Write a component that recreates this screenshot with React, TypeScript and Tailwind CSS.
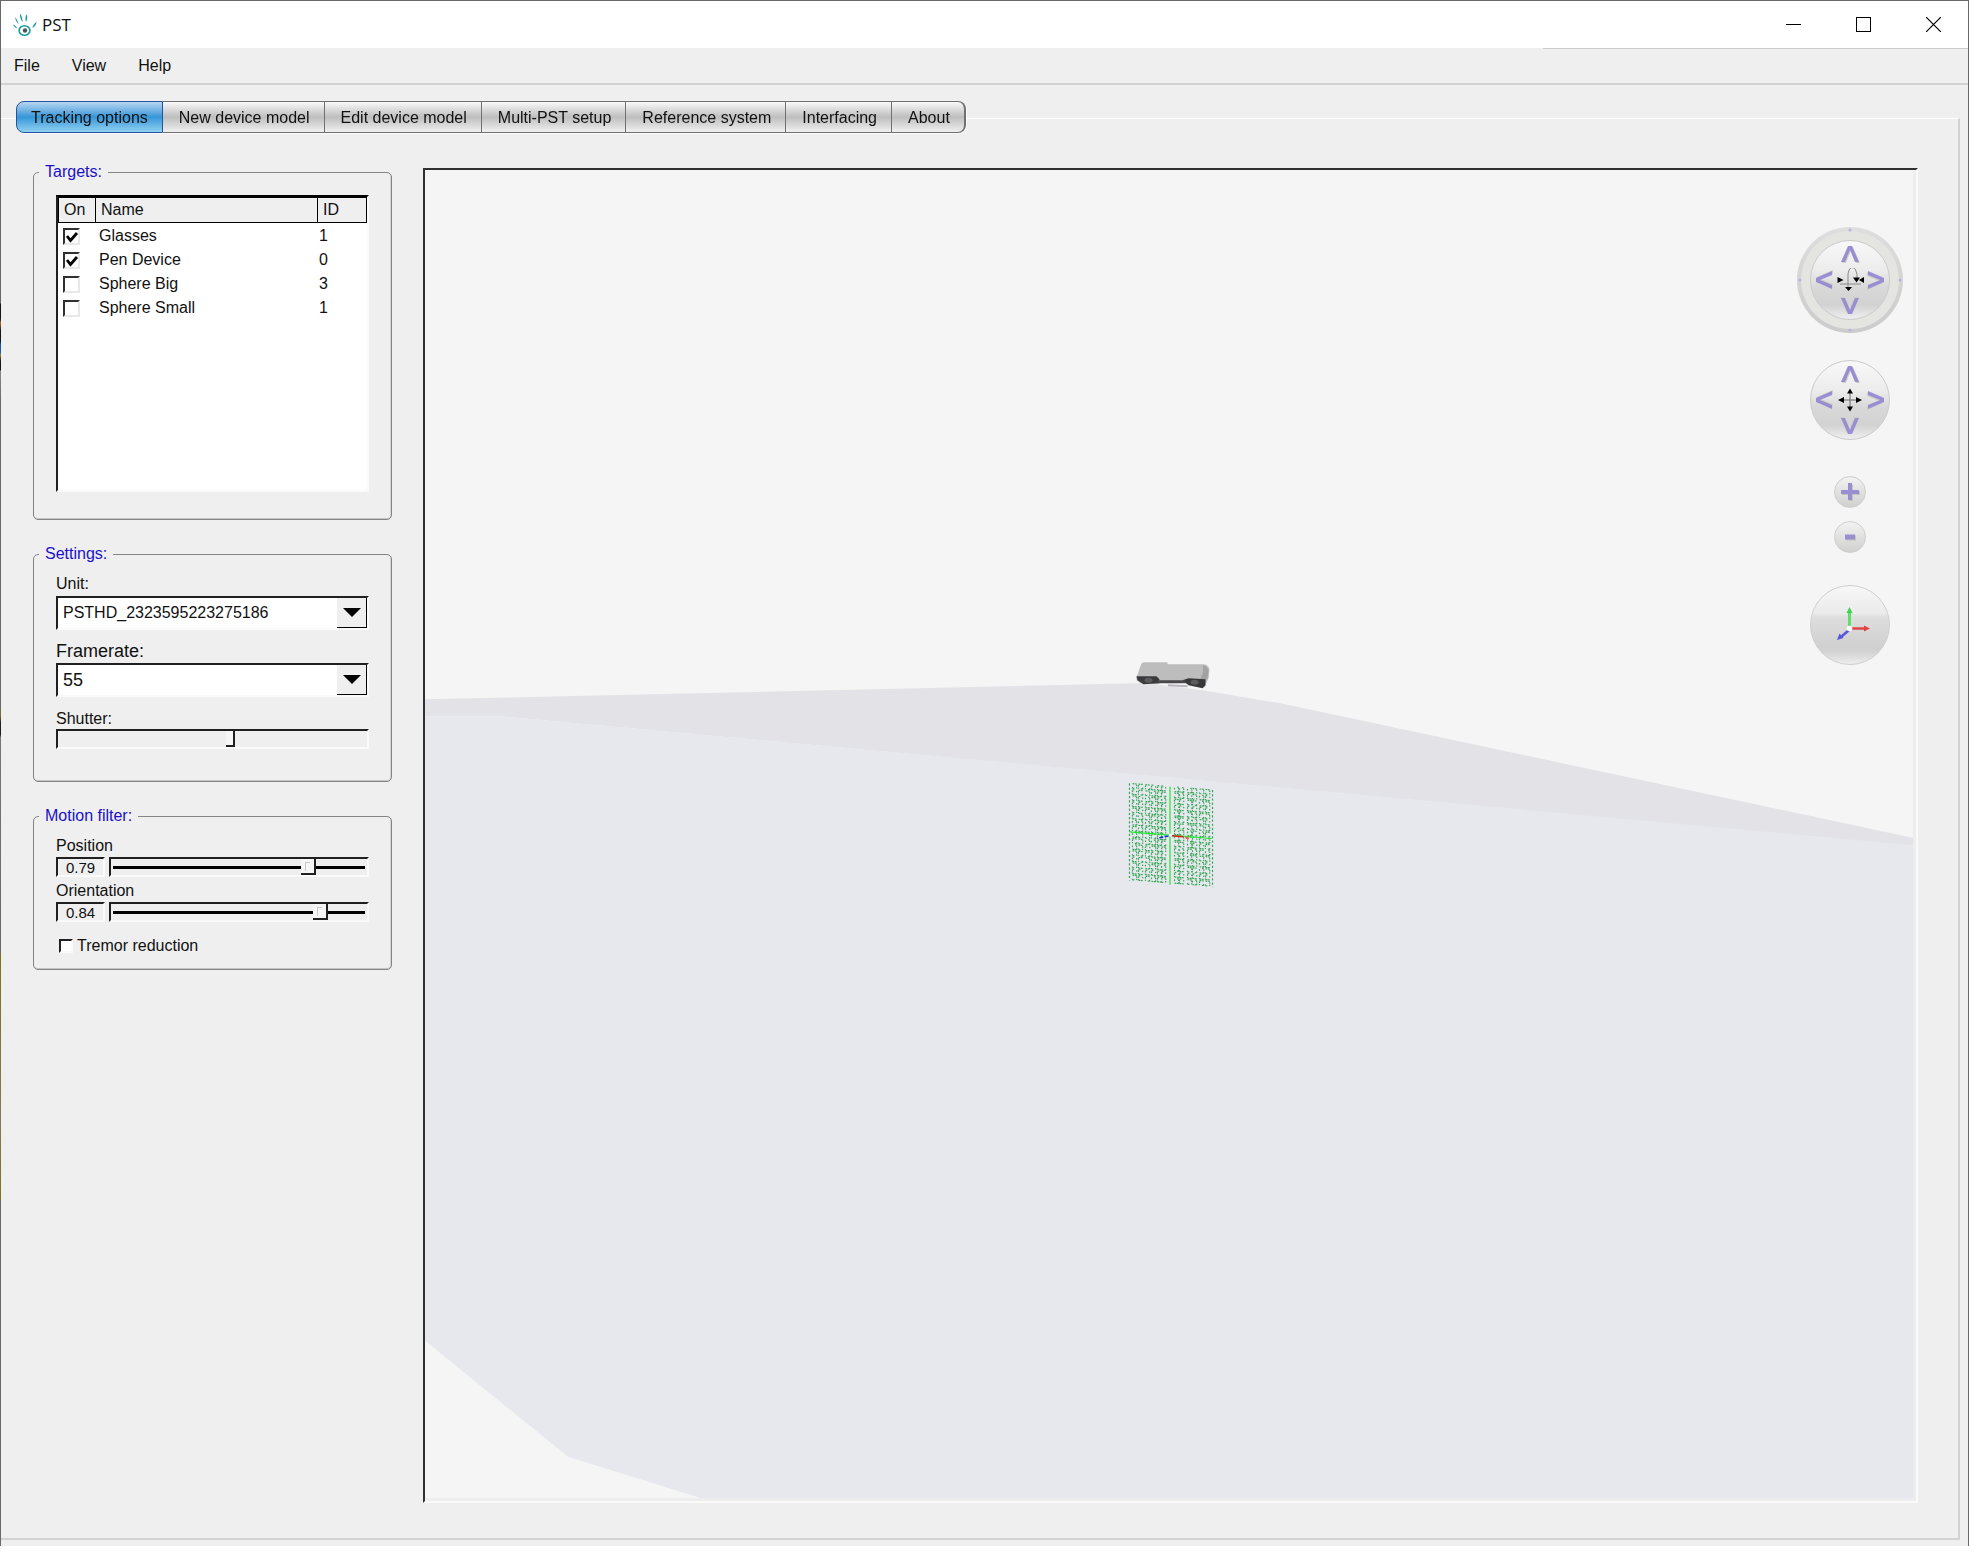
import { useState, type ReactNode } from "react";
import clsx from "clsx";

const MENUS = ["File", "View", "Help"];

const TABS = [
  "Tracking options",
  "New device model",
  "Edit device model",
  "Multi-PST setup",
  "Reference system",
  "Interfacing",
  "About",
];

const TARGETS = [
  { name: "Glasses", id: 1, on: true },
  { name: "Pen Device", id: 0, on: true },
  { name: "Sphere Big", id: 3, on: false },
  { name: "Sphere Small", id: 1, on: false },
];

function Logo() {
  return (
    <svg viewBox="0 0 24 24" className="h-6 w-6" fill="#169c9f">
      <path d="M2 4.2c1.4 1.4 3.2 4.6 3.6 7-1.6-1.8-3.4-4.8-3.6-7ZM7 .4c1.6 2.2 2.8 5.6 2.6 8.8C7.900 6.800 6.600 3.400 7 .4ZM13.400 1.200c1.400 1.800 1 5-.4 7.800-.8-2.800-.6-5.800.4-7.800ZM0 11.600c1.600.4 3.400 2 4.200 3.800-2-.6-3.600-2.200-4.200-3.800ZM23.600 9c-.4 2.600-2 5-4.200 6 .4-2.200 2-5 4.200-6Z" />
      <ellipse cx="11.500" cy="17.500" rx="5.400" ry="4.800" fill="none" stroke="#169c9f" strokeWidth="1.600" />
      <circle cx="12" cy="17.500" r="2.200" fill="#4d5557" />
    </svg>
  );
}

function TitleBar() {
  return (
    <header className="flex h-[47px] items-center bg-white pl-3">
      <Logo />
      <h1 className="ml-[5px] flex-1 font-['Open_Sans',sans-serif] text-[17px] leading-6">PST</h1>
      <button aria-label="Minimize" className="flex h-full w-[70px] items-center justify-center">
        <svg width="15" height="15" shapeRendering="crispEdges">
          <path d="M0 7.500h15" stroke="#000" />
        </svg>
      </button>
      <button aria-label="Maximize" className="flex h-full w-[70px] items-center justify-center">
        <svg width="15" height="15" shapeRendering="crispEdges">
          <rect x=".5" y=".5" width="14" height="14" fill="none" stroke="#000" />
        </svg>
      </button>
      <button aria-label="Close" className="flex h-full w-[70px] items-center justify-center">
        <svg width="15" height="15">
          <path d="M0 0l15 15M15 0L0 15" stroke="#000" strokeWidth="1.200" />
        </svg>
      </button>
    </header>
  );
}

function Tabs({ active, onSelect }: { active: string; onSelect: (tab: string) => void }) {
  return (
    <div role="tablist" className="-mt-[18px] ml-[15px] flex h-8 self-start drop-shadow-[1px_1px_0_#fafafa]">
      {TABS.map((tab) => (
        <button
          key={tab}
          role="tab"
          aria-selected={tab === active}
          onClick={() => onSelect(tab)}
          className={clsx(
            "border-y border-r pl-4 pr-[14px] pt-[2px] text-base leading-6 first:rounded-l-lg first:border-l first:pl-[14px] last:rounded-r-lg last:border-r-2",
            tab === active
              ? "border-[#26529f] bg-linear-to-b from-[#b4d6f0] via-[#3396d8] to-[#8fd2f2]"
              : "border-[#707070] bg-linear-to-b from-[#fafafa] via-[#bebebe] to-[#f0f0f0]"
          )}
        >
          {tab}
        </button>
      ))}
    </div>
  );
}

function Group({ title, className, children }: { title: string; className?: string; children: ReactNode }) {
  return (
    <fieldset className={clsx("rounded-[5px] border border-[#858585] px-[22px] shadow-[inset_0_-1px_0_#c4c4c4,inset_-1px_0_0_#d4d4d4]", className)}>
      <legend className="-ml-[17px] px-[6px] text-base leading-5 text-[#1a10cc]">{title}</legend>
      {children}
    </fieldset>
  );
}

function Tick({ label, on, onToggle }: { label: string; on: boolean; onToggle: () => void }) {
  return (
    <span className="relative block h-[17px] w-[17px]">
      <input
        type="checkbox"
        aria-label={label}
        checked={on}
        onChange={onToggle}
        className="peer block h-[17px] w-[17px] appearance-none border-2 border-[#e8e8e8] border-l-[#303030] border-t-[#303030] bg-white"
      />
      <svg viewBox="0 0 17 17" className="pointer-events-none absolute inset-0 hidden peer-checked:block">
        <path d="M4 8l3.500 4.500L14 5" fill="none" stroke="#000" strokeWidth="2.800" />
      </svg>
    </span>
  );
}

function TargetList() {
  const [targets, setTargets] = useState(TARGETS);
  const toggle = (name: string) =>
    setTargets(targets.map((t) => (t.name === name ? { ...t, on: !t.on } : t)));

  return (
    <div className="h-[297px] border-2 border-b-[#fafafa] border-l-[#202020] border-r-[#fafafa] border-t-black bg-white">
      <table className="w-full table-fixed border-separate border-spacing-0 text-left text-base leading-[22px]">
        <colgroup>
          <col className="w-[38px]" />
          <col />
          <col className="w-[49px]" />
        </colgroup>
        <thead className="bg-[#efefef]">
          <tr>
            <th className="border border-black pb-px pl-[5px] pt-px font-normal">On</th>
            <th className="border border-l-0 border-black pl-[5px] font-normal">Name</th>
            <th className="border border-l-0 border-black pl-[5px] font-normal">ID</th>
          </tr>
        </thead>
        <tbody>
          {targets.map((t) => (
            <tr key={t.name}>
              <td className="pl-[5px] pt-[2px]">
                <Tick label={t.name} on={t.on} onToggle={() => toggle(t.name)} />
              </td>
              <td className="pl-[3px] pt-[2px]">{t.name}</td>
              <td className="pl-px pt-[2px]">{t.id}</td>
            </tr>
          ))}
        </tbody>
      </table>
    </div>
  );
}

function Select({ id, value, size }: { id: string; value: string; size: string }) {
  return (
    <div className="relative mt-[2px] h-[34px] border-2 border-b-[#fafafa] border-l-[#202020] border-r-[#fafafa] border-t-[#202020] bg-white">
      <select id={id} defaultValue={value} className={clsx("h-full w-full appearance-none pl-[5px] leading-6", size)}>
        <option>{value}</option>
      </select>
      <span className="pointer-events-none absolute inset-y-0 right-0 flex w-[30px] items-center justify-center border-b border-r border-black bg-[#efefef]">
        <svg width="18" height="9">
          <path d="M0 0h18L9 9Z" />
        </svg>
      </span>
    </div>
  );
}

const SUNKEN = "border-2 border-b-[#fafafa] border-l-[#202020] border-r-[#fafafa] border-t-[#202020]";

function FilterSlider({ id, label, initial }: { id: string; label: string; initial: number }) {
  const [value, setValue] = useState(initial);

  return (
    <div>
      <label htmlFor={id} className="block pb-px leading-5">{label}</label>
      <div className="flex h-5 gap-1">
        <output htmlFor={id} className={clsx("w-[49px] text-center text-[15px] leading-[17px]", SUNKEN)}>
          {value.toFixed(2)}
        </output>
        <input
          id={id}
          type="range"
          min="0"
          max="1"
          step="0.01"
          value={value}
          onChange={(e) => setValue(Number(e.target.value))}
          className={clsx(
            "h-5 min-w-0 flex-1 appearance-none bg-[linear-gradient(#000,#000)] bg-size-[calc(100%-4px)_3px] bg-center bg-no-repeat",
            "[&::-webkit-slider-thumb]:h-4 [&::-webkit-slider-thumb]:w-[15px] [&::-webkit-slider-thumb]:appearance-none",
            "[&::-webkit-slider-thumb]:border-b-2 [&::-webkit-slider-thumb]:border-r-2 [&::-webkit-slider-thumb]:border-[#202020]",
            "[&::-webkit-slider-thumb]:bg-[linear-gradient(#f6f6f6,#f6f6f6),linear-gradient(#c8c8c8,#c8c8c8)] [&::-webkit-slider-thumb]:bg-size-[4px_8px,5px_9px]",
            "[&::-webkit-slider-thumb]:bg-position-[5px_4px,4px_3px] [&::-webkit-slider-thumb]:bg-no-repeat [&::-webkit-slider-thumb]:bg-[#f6f6f6]",
            SUNKEN
          )}
        />
      </div>
    </div>
  );
}

function Sidebar() {
  const [tremor, setTremor] = useState(false);

  return (
    <aside className="w-[359px] shrink-0 text-base">
      <Group title="Targets:" className="h-[358px] pt-[13px]">
        <TargetList />
      </Group>

      <Group title="Settings:" className="mt-6 h-[238px]">
        <label htmlFor="unit" className="mt-[10px] block leading-5">Unit:</label>
        <Select id="unit" value="PSTHD_2323595223275186" size="text-base" />
        <label htmlFor="framerate" className="mt-[11px] block text-lg leading-5">Framerate:</label>
        <Select id="framerate" value="55" size="text-lg" />
        <label htmlFor="shutter" className="mt-3 block leading-5">Shutter:</label>
        <input
          id="shutter"
          type="range"
          defaultValue={56}
          className={clsx(
            "block h-5 w-full appearance-none [&::-webkit-slider-thumb]:h-4 [&::-webkit-slider-thumb]:w-[9px] [&::-webkit-slider-thumb]:appearance-none",
            "[&::-webkit-slider-thumb]:border-b-2 [&::-webkit-slider-thumb]:border-r-2 [&::-webkit-slider-thumb]:border-[#202020] [&::-webkit-slider-thumb]:bg-[#f6f6f6]",
            SUNKEN
          )}
        />
      </Group>

      <Group title="Motion filter:" className="mt-6 h-[164px]">
        <div className="flex flex-col gap-1 pt-[10px]">
          <FilterSlider id="position" label="Position" initial={0.79} />
          <FilterSlider id="orientation" label="Orientation" initial={0.84} />
        </div>
        <label className="mt-[14px] flex items-center gap-1 pl-[3px] leading-5">
          <input
            type="checkbox"
            checked={tremor}
            onChange={() => setTremor(!tremor)}
            className="h-[14px] w-[14px] appearance-none border-2 border-[#fafafa] border-l-[#202020] border-t-[#202020] bg-white checked:bg-gray-500"
          />
          Tremor reduction
        </label>
      </Group>
    </aside>
  );
}

// broken outline strokes for one cell of the calibration sheet
const SEGMENTS = ["M0 0h1.800", "M2.600 0h1.600", "M4.200 .8v1.400", "M0 .8v1.600", "M0 3.400v1.200", "M4.200 3.200v1.400", "M0 4.600h1.800", "M2.400 4.600h1.800"];
const COLUMNS = [3, 9, 16, 22, 28, 32, 45, 50, 58, 63, 70, 76];

function CalibrationSheet() {
  const cells = COLUMNS.flatMap((x, col) =>
    Array.from({ length: 16 }, (_, row) => {
      const seed = (col * 7 + row * 13 + col * row * 5) % 11;
      const d = SEGMENTS.filter((_, i) => (seed + i * 3) % 4 !== 1).join("");
      return <path key={`${col}-${row}`} d={d} transform={`translate(${x} ${row * 6.1})`} />;
    })
  );

  return (
    <g transform="matrix(1 .08 0 1 1130 783)">
      <g fill="none" stroke="#35a656" strokeWidth="1.200">
        {cells}
        <path d="M0 0v97M83 0v97" strokeDasharray="2.200 2" />
      </g>
      <path d="M0 48.500h82M40.500 0v98" fill="none" stroke="#1fe82f" strokeWidth="1.200" />
      <path d="M42 49h12" stroke="#e01818" strokeWidth="1.400" />
      <path d="M56 49l3 2" stroke="#f05a4a" strokeWidth="2" />
      <path d="M39 49.500l-11 3" stroke="#1a2be0" strokeWidth="1.600" strokeDasharray="4 1.500" />
      <circle cx="41" cy="48.500" r="1.600" fill="#fff" />
    </g>
  );
}

function TrackerUnit() {
  return (
    <g>
      <path d="M1137 677l4-11q1-4 4-4h23v2h36q4 0 6 5l-1 9-4 9h-4l-15-5h-24l-3 2-18-1-4-3Z" fill="#bdbdbd" />
      <path d="M1138 676l3-10q1-4 4-4h23v2h36q4 0 6 5l-2 9-6 3-19-3h-22l-6-2Z" fill="url(#unit)" />
      <path d="M1203 665q5 1 6 5l-1 8-3 3-4-3q4-6 2-13Z" fill="#a2a2a2" />
      <path d="M1137 676l20 0 3 3-1 4-15 1-6-4Z" fill="#3b3a3d" />
      <path d="M1183 680l6-2 17 1v6l-3 3-14-3Z" fill="#38373a" />
      <path d="M1158 680l27 0 2 3-28 0Z" fill="#48474b" />
      <ellipse cx="1149" cy="680" rx="4" ry="2.500" fill="#5b5a5e" />
      <ellipse cx="1195" cy="682" rx="4" ry="2.500" fill="#5b5a5e" />
      <path d="M1168 684l20 1v2l-19-1Z" fill="#b8b4c0" />
    </g>
  );
}

function Scene() {
  return (
    <svg viewBox="426 170 1490 1331" preserveAspectRatio="xMinYMin slice" className="absolute inset-0 h-full w-full">
      <defs>
        <linearGradient id="unit" x1="0" y1="0" x2="0" y2="1">
          <stop offset="0" stopColor="#a9a9a9" />
          <stop offset=".6" stopColor="#d2d2d2" />
          <stop offset="1" stopColor="#c2c2c2" />
        </linearGradient>
      </defs>
      <path d="M426 699L1136 683H1147L1203 690L1281 703L1916 838V846L502 716H426Z" fill="#e3e2e6" />
      <path d="M426 716H502L1916 845V1501H714L569 1456L426 1340Z" fill="#e7e8ed" />
      <TrackerUnit />
      <CalibrationSheet />
    </svg>
  );
}

function Chevron({ label, className }: { label: string; className: string }) {
  return (
    <button aria-label={label} className={clsx("flex items-center justify-center", className)}>
      <svg width="20" height="18" viewBox="0 0 20 18">
        <path d="M2 18L9 2h4l7 16h-4L11 6 6 18Z" fill="#cfcfc4" />
        <path d="M1 17L8 1h4l7 16h-4L10 5 5 17Z" fill="#9a8ed2" />
      </svg>
    </button>
  );
}

function Dial({ action, children }: { action: string; children: ReactNode }) {
  return (
    <div className="grid h-20 w-20 grid-cols-3 grid-rows-3 place-items-center rounded-full border border-[#cbcbcb] bg-[linear-gradient(#f8f8f8,#ececec_38%,#d8d8d8_60%,#d2d2d2_82%,#efefef)]">
      <Chevron label={`${action} up`} className="col-start-2" />
      <Chevron label={`${action} left`} className="col-start-1 row-start-2 -rotate-90" />
      <svg viewBox="-14 -12 28 24" width="28" height="24" className="col-start-2 row-start-2">{children}</svg>
      <Chevron label={`${action} right`} className="col-start-3 row-start-2 rotate-90" />
      <Chevron label={`${action} down`} className="col-start-2 row-start-3 rotate-180" />
    </div>
  );
}

const ROUND = "flex items-center justify-center rounded-full border border-[#cfcfcf]";

function ViewControls() {
  return (
    <div className="absolute right-[13px] top-[57px] flex flex-col items-center">
      <div className="relative flex h-[106px] w-[106px] items-center justify-center rounded-full bg-linear-to-b from-[#dedede] to-[#cbcbcb] p-1">
        <div className="flex h-full w-full items-center justify-center rounded-full bg-[#e4e4e0]">
          <Dial action="Rotate">
            <path d="M-10 4H11M-2 7V-6q1-7 5-6.500 3 .5 4 7V-1" fill="none" stroke="#888" strokeWidth="1" />
            <path d="M-12.500-3v6l6-3ZM14-3v6l-5-3ZM3-2.500h7L6.500 2.500ZM-5 7H2L-1.500 11Z" />
          </Dial>
        </div>
        <svg viewBox="0 0 106 106" className="pointer-events-none absolute inset-0" fill="#b9b3dc">
          <circle cx="53" cy="3" r="1.500" />
          <circle cx="53" cy="103" r="1.500" />
          <circle cx="3" cy="53" r="1.500" />
          <circle cx="103" cy="53" r="1.500" />
        </svg>
      </div>
      <div className="mt-[27px]">
        <Dial action="Pan">
          <path d="M-8 0H8M0-8V8" stroke="#666" />
          <path d="M-12 0l6-3v6ZM12 0L6-3v6ZM0-11.500l3 5h-6ZM0 11.500l3-5h-6Z" />
        </Dial>
      </div>
      <button aria-label="Zoom in" className={clsx(ROUND, "mt-9 h-8 w-8 bg-linear-to-b from-[#f2f2f2] to-[#d0d0ce]")}>
        <svg width="20" height="20">
          <path d="M2 11h18M11 3v16" stroke="#c3c3ba" strokeWidth="4" />
          <path d="M1 10h18M10 1v17" stroke="#9a8ed2" strokeWidth="4" />
        </svg>
      </button>
      <button aria-label="Zoom out" className={clsx(ROUND, "mt-[13px] h-8 w-8 bg-linear-to-b from-[#f2f2f2] to-[#d0d0ce]")}>
        <svg width="12" height="8">
          <path d="M2 5h10" stroke="#c3c3ba" strokeWidth="5" />
          <path d="M1 4h10" stroke="#9a8ed2" strokeWidth="5" />
        </svg>
      </button>
      <button
        aria-label="Reset view"
        className={clsx(ROUND, "mt-8 h-20 w-20 bg-[linear-gradient(#f7f7f7,#ebebeb_35%,#dedede_40%,#d0d0d0_78%,#d3d3d3_85%,#ededed)]")}
      >
        <svg viewBox="-20 -24 40 40" width="40" height="40">
          <path d="M-.5 0V-17" stroke="#5fe06c" strokeWidth="3" />
          <path d="M-.5-22l3 6h-6Z" fill="#3fd24e" />
          <path d="M1-.5H15" stroke="#e04444" strokeWidth="2.500" />
          <path d="M20-.5l-6 3v-6Z" fill="#e04444" />
          <path d="M-1 1l-8 7" stroke="#5a55dd" strokeWidth="2.500" />
          <path d="M-13 11l2.500-6.500 4 4.500Z" fill="#5a55dd" />
          <circle cx="-.5" cy="-.5" r="2.800" fill="#fff" />
        </svg>
      </button>
    </div>
  );
}

export default function App() {
  const [tab, setTab] = useState(TABS[0]);

  return (
    <div className="flex min-h-screen flex-col bg-white pb-[9px] font-['Liberation_Sans',Arial,sans-serif] text-[#111]">
      <div className="relative flex flex-1 flex-col border-x border-t border-[#686868] bg-[#efefef]">
        {/* strip of desktop showing along the window edge */}
        <div className="absolute -left-px top-0 h-full w-px bg-[linear-gradient(#686868_302px,#151515_303px,#151515_318px,#b0662c_322px,#151515_330px,#151515_340px,#1a5c9c_344px,#1a5c9c_351px,#98803c_354px,#151515_360px,#151515_369px,#8a8a8a_370px,#6a6a6a_400px,#6a6a6a_705px,#756c2c_715px,#201c20_722px,#201c20_734px,#777_736px,#686868_950px,#80711f_954px,#857a50_1120px,#80711f_1198px,#686868_1200px)]" />
        <TitleBar />
        <div className="h-px w-[425px] max-w-full self-end bg-[#cdcdcd]" />
        <nav className="flex h-[36px] items-center gap-8 border-b-2 border-[#d2d2d2] pl-[13px] text-base leading-5">
          {MENUS.map((menu) => (
            <button key={menu}>{menu}</button>
          ))}
        </nav>

        <main className="mb-[6px] mr-2 mt-[33px] flex flex-1 flex-col border-b-2 border-r-2 border-t border-b-[#d2d2d2] border-r-[#d2d2d2] border-t-white">
          <Tabs active={tab} onSelect={setTab} />
          <div className="mt-[29px] flex flex-1 gap-[31px] pb-[35px] pl-8 pr-10">
            <Sidebar />
            <section
              aria-label="3D view"
              className="relative mt-[6px] min-w-0 flex-1 border-2 border-b-[#fafafa] border-l-[#303030] border-r-[#fafafa] border-t-[#303030] bg-[#f5f5f5]"
            >
              <Scene />
              <ViewControls />
              <div className="pointer-events-none absolute inset-0 border-b-[3px] border-r-[3px] border-[#ededed]" />
            </section>
          </div>
        </main>
      </div>
    </div>
  );
}
